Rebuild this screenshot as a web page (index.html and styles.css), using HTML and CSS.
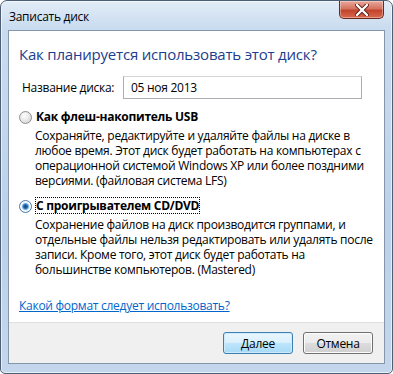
FILE: index.html
```html
<!DOCTYPE html>
<html lang="ru">
<head>
    <meta charset="UTF-8">
    <title>Записать диск</title>
    <link rel="stylesheet" href="styles.css">
</head>
<body>
    <div class="window">
        <div class="titlebar">
            <div class="title">Записать диск</div>
            <div class="close-btn">
                <svg width="14" height="12" viewBox="0 0 14 12">
                    <path d="M2 1 L12 11 M12 1 L2 11" stroke="#5a1a12" stroke-width="4" stroke-linecap="round"/>
                    <path d="M2 1 L12 11 M12 1 L2 11" stroke="#fff" stroke-width="2.4" stroke-linecap="round"/>
                </svg>
            </div>
        </div>

        <div class="pane">
            <div class="content">
                <h1 class="instruction">Как планируется использовать этот диск?</h1>

                <div class="name-row">
                    <label class="name-label">Название диска:</label>
                    <div class="textbox">05 ноя 2013</div>
                </div>

                <div class="option">
                    <div class="option-head">
                        <span class="radio"></span>
                        <span class="option-title">Как флеш-накопитель USB</span>
                    </div>
                    <p class="option-desc">Сохраняйте, редактируйте и удаляйте файлы на диске в любое время. Этот диск будет работать на компьютерах с операционной системой Windows XP или более поздними версиями. (файловая система LFS)</p>
                </div>

                <div class="option">
                    <div class="option-head">
                        <span class="radio checked"></span>
                        <span class="option-title focused">С проигрывателем CD/DVD</span>
                    </div>
                    <p class="option-desc">Сохранение файлов на диск производится группами, и отдельные файлы нельзя редактировать или удалять после записи. Кроме того, этот диск будет работать на большинстве компьютеров. (Mastered)</p>
                </div>

                <a class="help-link" href="#">Какой формат следует использовать?</a>
            </div>

            <div class="footer">
                <div class="button default">Далее</div>
                <div class="button">Отмена</div>
            </div>
        </div>
    </div>
</body>
</html>
```

FILE: styles.css
```css
body {
    margin: 0;
    padding: 0;
    background: #fff;
    font-family: 'Open Sans', 'Noto Sans', sans-serif;
    font-size: 12px;
    letter-spacing: -0.27px;
    color: #000;
}

.window {
    width: 393px;
    height: 374px;
    box-sizing: border-box;
    border: 1px solid #4d5f75;
    border-radius: 7px 7px 5px 5px;
    background: linear-gradient(#e2ecf7, #c9dbef 28px, #bcd1ea 60%, #c3d6ec);
    box-shadow: inset 0 0 0 1px rgba(255, 255, 255, 0.6);
    padding: 0 7px 9px;
    display: flex;
    flex-direction: column;
}

.titlebar {
    height: 29px;
    display: flex;
    justify-content: space-between;
    align-items: flex-start;
}

.title {
    margin-top: 7px;
    margin-left: 1px;
    font-size: 12px;
    color: #000;
}

.close-btn {
    width: 45px;
    height: 18px;
    margin-right: 1px;
    box-sizing: border-box;
    border: 1px solid #6b2a20;
    border-top: none;
    border-radius: 0 0 5px 5px;
    background: linear-gradient(#e9a99c, #d4735f 45%, #c2442c 55%, #d86a4f);
    box-shadow: inset 0 0 0 1px rgba(255, 255, 255, 0.35);
    display: flex;
    align-items: center;
    justify-content: center;
}

.pane {
    flex: 1;
    border: 1px solid #8595aa;
    background: #fff;
    display: flex;
    flex-direction: column;
}

.content {
    flex: 1;
    padding: 13px 10px 0 10px;
}

.instruction {
    margin: 0;
    font-size: 15px;
    font-weight: normal;
    letter-spacing: -0.2px;
    line-height: 20px;
    color: #1c3d8d;
}

.name-row {
    display: flex;
    align-items: center;
    margin-top: 12px;
    padding-left: 3px;
}

.name-label {
    width: 101px;
}

.textbox {
    width: 239px;
    height: 23px;
    box-sizing: border-box;
    border: 1px solid #abadb3;
    border-top-color: #d5d5d5;
    padding: 3px 7px;
    line-height: 15px;
}

.option {
    margin-top: 9px;
}

.option + .option {
    margin-top: 9px;
}

.option-head {
    display: flex;
    align-items: center;
    height: 16px;
}

.radio {
    width: 11px;
    height: 11px;
    border-radius: 50%;
    border: 1px solid #8e8f8f;
    background: radial-gradient(circle at 40% 35%, #fff, #e2e2e2 60%, #c8c8c8);
    margin-right: 3px;
    margin-top: 2px;
}

.radio.checked {
    border-color: #4d7aa8;
    background: radial-gradient(circle, #0d3c70 0, #2d6db0 2px, #6eb0e8 3px, #e8f2fb 4px, #ffffff 5px, #d2dbe4 6px);
}

.option-title {
    font-weight: bold;
    padding: 0 1px;
}

.option-title.focused {
    outline: 1px dotted #000;
    outline-offset: -1px;
}

.option-desc {
    margin: 4px 0 0 16px;
    line-height: 15px;
}

.help-link {
    display: inline-block;
    margin-top: 20px;
    color: #0066cc;
    text-decoration: underline;
}

.footer {
    height: 40px;
    border-top: 1px solid #dfdfdf;
    background: #f0f0f0;
    display: flex;
    justify-content: flex-end;
    align-items: center;
    gap: 10px;
    padding-right: 11px;
}

.button {
    width: 70px;
    height: 22px;
    box-sizing: border-box;
    border: 1px solid #707070;
    border-radius: 3px;
    background: linear-gradient(#f2f2f2, #ebebeb 50%, #dddddd 50%, #cfcfcf);
    box-shadow: inset 0 0 0 1px #fcfcfc;
    display: flex;
    align-items: center;
    justify-content: center;
}

.button.default {
    border-color: #3c7fb1;
    background: linear-gradient(#eaf6fd, #d9f0fc 50%, #bee6fd 50%, #a7d9f5);
    box-shadow: inset 0 0 0 1px #cfeafb;
}
```
